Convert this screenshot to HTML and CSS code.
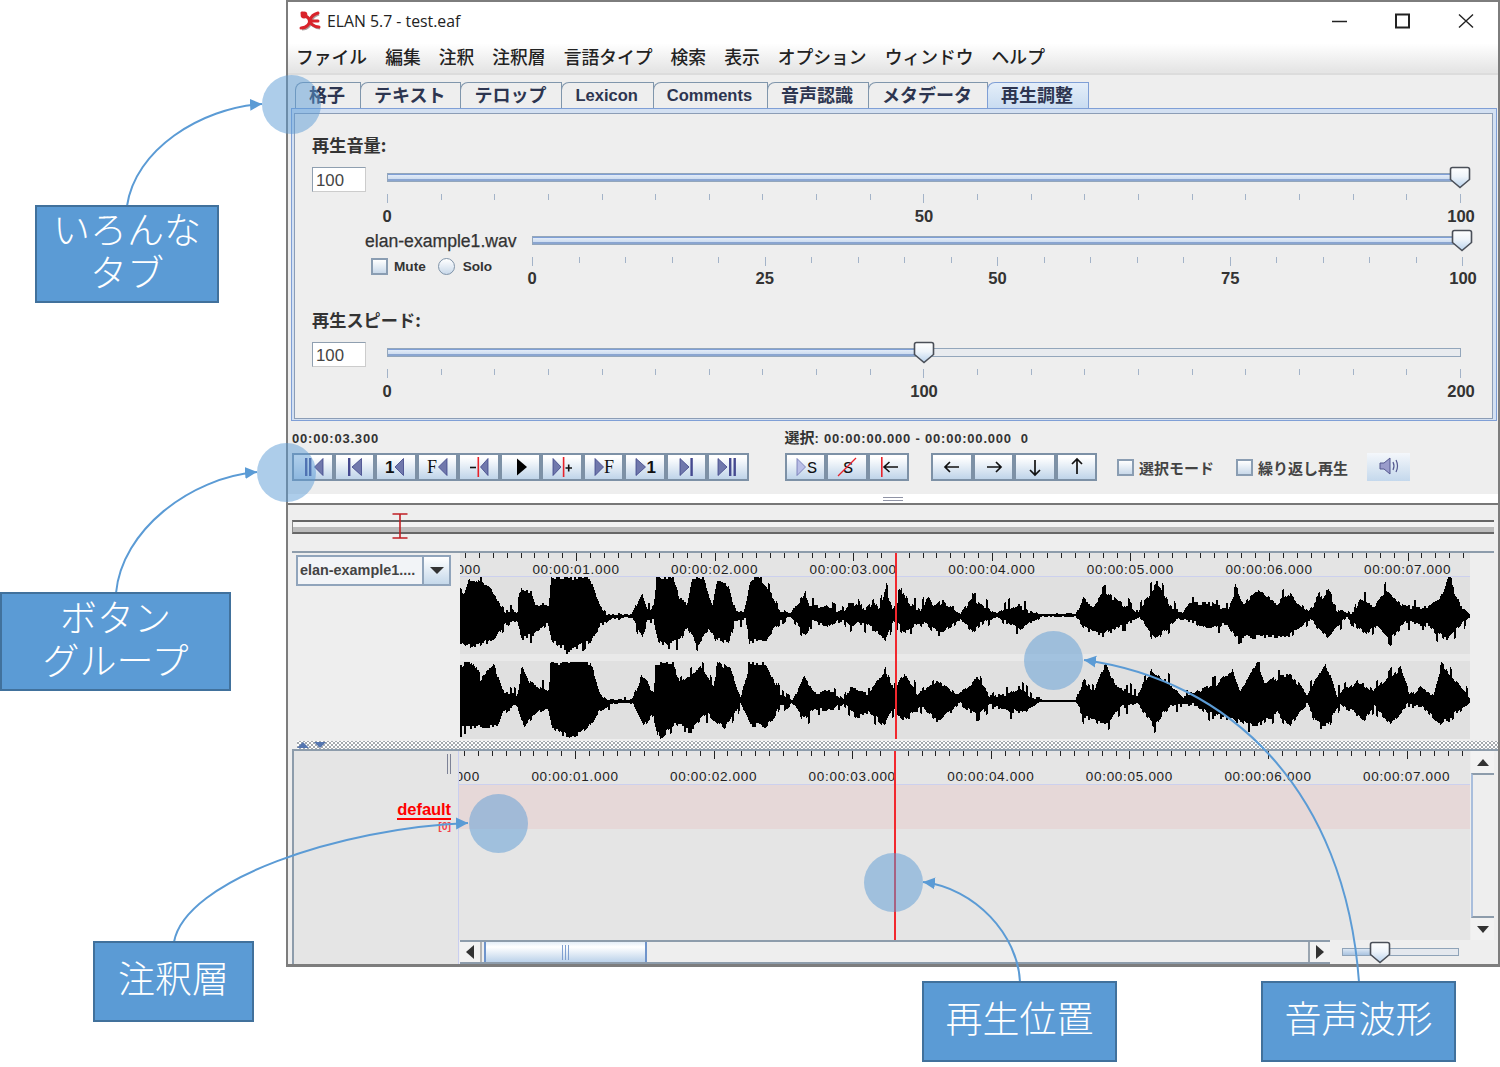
FILE: index.html

```html
<!DOCTYPE html>
<html lang="ja">
<head>
  <meta charset="UTF-8">
  <title>ELAN 5.7 - test.eaf</title>
  <link rel="stylesheet" href="styles.css">
</head>
<body>
<div class="page">

  <svg class="defs" width="0" height="0">
    <defs>
      <linearGradient id="thumbFill" x1="0" y1="0" x2="0" y2="1">
        <stop offset="0" stop-color="#ffffff"/>
        <stop offset="0.45" stop-color="#eef4fa"/>
        <stop offset="1" stop-color="#b9d2ec"/>
      </linearGradient>
      <symbol id="thumb" viewBox="0 0 22 23">
        <path d="M1.5 3.5Q1.5 1.5 3.5 1.5H18.5Q20.5 1.5 20.5 3.5V13.5L11 21.5L1.5 13.5Z" fill="url(#thumbFill)" stroke="#4a4f58" stroke-width="1.6"/>
      </symbol>
    </defs>
  </svg>

  <div class="window">
    <div class="chrome">
      <div class="titlebar">
        <svg class="logo" viewBox="0 0 22 20">
          <g fill="none" stroke="#a9a0a0" stroke-width="3" transform="translate(1 1)">
            <path d="M2 17C8 17 12 12 10 8S4 5 3 2"/><path d="M19 2C15 3 12 6 11 9S15 16 20 16"/>
          </g>
          <g fill="none" stroke="#d9232b" stroke-width="3" stroke-linecap="round">
            <path d="M2 17C8 17 12 12 10 8S4 5 3 2"/><path d="M19 2C15 3 12 6 11 9S15 16 20 16"/><path d="M12 10H19"/>
          </g>
          <circle cx="5" cy="4" r="3.4" fill="#d9232b"/>
        </svg>
        <span class="title">ELAN 5.7 - test.eaf</span>
        <div class="win-controls">
          <svg viewBox="0 0 16 16"><path d="M0 8.5H15" stroke="#222" stroke-width="1.5"/></svg>
          <svg viewBox="0 0 16 16"><rect x="1" y="1.5" width="13" height="13" fill="none" stroke="#222" stroke-width="2"/></svg>
          <svg viewBox="0 0 16 16"><path d="M1 1.5L15 14.5M15 1.5L1 14.5" stroke="#222" stroke-width="1.4"/></svg>
        </div>
      </div>
      <div class="menubar">
        <span>ファイル</span><span>編集</span><span>注釈</span><span>注釈層</span><span>言語タイプ</span><span>検索</span><span>表示</span><span>オプション</span><span>ウィンドウ</span><span>ヘルプ</span>
      </div>
    </div>

    <div class="tabs">
      <div class="tab">格子</div>
      <div class="tab">テキスト</div>
      <div class="tab">テロップ</div>
      <div class="tab latin">Lexicon</div>
      <div class="tab latin">Comments</div>
      <div class="tab">音声認識</div>
      <div class="tab">メタデータ</div>
      <div class="tab active">再生調整</div>
    </div>

    <div class="tab-panel">
      <div class="tab-inner">
        <div class="field-title first">再生音量:</div>
        <div class="field-row">
          <div class="num-input">100</div>
          <div class="slider">
            <div class="track"><div class="fill full"></div>
              <svg class="thumb end"><use href="#thumb"/></svg>
            </div>
            <div class="ticks" data-count="20" data-major="10"></div>
            <div class="scale"><span>0</span><span>50</span><span>100</span></div>
          </div>
        </div>
        <div class="field-row second">
          <div class="track-head">
            <div class="wav-name">elan-example1.wav</div>
            <div class="mute-row">
              <span class="check"></span><span class="small">Mute</span>
              <span class="radio"></span><span class="small">Solo</span>
            </div>
          </div>
          <div class="slider wide">
            <div class="track"><div class="fill full"></div>
              <svg class="thumb end"><use href="#thumb"/></svg>
            </div>
            <div class="ticks" data-count="20" data-major="5"></div>
            <div class="scale"><span>0</span><span>25</span><span>50</span><span>75</span><span>100</span></div>
          </div>
        </div>
        <div class="field-title">再生スピード:</div>
        <div class="field-row">
          <div class="num-input">100</div>
          <div class="slider">
            <div class="track"><div class="fill half"></div>
              <svg class="thumb mid"><use href="#thumb"/></svg>
            </div>
            <div class="ticks" data-count="20" data-major="10"></div>
            <div class="scale"><span>0</span><span>100</span><span>200</span></div>
          </div>
        </div>
      </div>
    </div>

    <div class="toolbar">
      <div class="tool-col">
        <div class="time-label">00:00:03.300</div>
        <div class="btn-group">
          <div class="btn"><svg viewBox="0 0 38 22"><rect class="bar" x="11" y="2" width="2.4" height="18"/><rect class="bar" x="15" y="2" width="2.4" height="18"/><polygon class="tri" points="20.5,11 29,2.5 29,19.5"/></svg></div>
          <div class="btn"><svg viewBox="0 0 38 22"><rect class="bar" x="12" y="2" width="2.4" height="18"/><polygon class="tri" points="16,11 25.5,2.5 25.5,19.5"/></svg></div>
          <div class="btn"><svg viewBox="0 0 38 22"><text class="t-bold" x="8" y="16.5">1</text><polygon class="tri" points="18,11 26.5,2.5 26.5,19.5"/></svg></div>
          <div class="btn"><svg viewBox="0 0 38 22"><text class="t-mono" x="8" y="17">F</text><polygon class="tri" points="19.5,11 28,2.5 28,19.5"/></svg></div>
          <div class="btn"><svg viewBox="0 0 38 22"><path d="M10 11.5H16" stroke="#111" stroke-width="1.6"/><rect class="red" x="17.5" y="1" width="1.6" height="20"/><polygon class="tri" points="20.5,11 28,2.5 28,19.5"/></svg></div>
          <div class="btn"><svg viewBox="0 0 38 22"><polygon points="15,2.5 25,11 15,19.5" fill="#000"/></svg></div>
          <div class="btn"><svg viewBox="0 0 38 22"><polygon class="tri" points="10,2.5 18,11 10,19.5"/><rect class="red" x="19.8" y="1" width="1.6" height="20"/><path d="M22.5 12H29M25.7 8.5V15.5" stroke="#111" stroke-width="1.6"/></svg></div>
          <div class="btn"><svg viewBox="0 0 38 22"><polygon class="tri" points="10,2.5 18.5,11 10,19.5"/><text class="t-mono" x="19" y="17">F</text></svg></div>
          <div class="btn"><svg viewBox="0 0 38 22"><polygon class="tri" points="10,2.5 19.5,11 10,19.5"/><text class="t-bold" x="20.5" y="16.5">1</text></svg></div>
          <div class="btn"><svg viewBox="0 0 38 22"><polygon class="tri" points="12,2.5 21,11 12,19.5"/><rect class="bar" x="22.4" y="2" width="2.4" height="18"/></svg></div>
          <div class="btn"><svg viewBox="0 0 38 22"><polygon class="tri" points="9,2.5 18,11 9,19.5"/><rect class="bar" x="20" y="2" width="2.4" height="18"/><rect class="bar" x="24.5" y="2" width="2.4" height="18"/></svg></div>
        </div>
      </div>
      <div class="tool-col right">
        <div class="time-label"><span class="jp">選択</span>: 00:00:00.000 - 00:00:00.000&nbsp; 0</div>
        <div class="tool-row">
          <div class="btn-group">
            <div class="btn"><svg viewBox="0 0 38 22"><polygon class="tri pale" points="10,2.5 18.5,11 10,19.5"/><text class="t-s" x="20" y="16.5">S</text></svg></div>
            <div class="btn"><svg viewBox="0 0 38 22"><text class="t-s" x="15" y="16.5">S</text><path d="M10 20L28 2" stroke="#e8222a" stroke-width="1.2"/></svg></div>
            <div class="btn"><svg viewBox="0 0 38 22"><rect class="red" x="11" y="1" width="1.6" height="20"/><path d="M14 11H28M19.5 6L14 11L19.5 16" fill="none" stroke="#111" stroke-width="1.6"/></svg></div>
          </div>
          <div class="btn-group arrows">
            <div class="btn"><svg viewBox="0 0 38 22"><path d="M12 11H26M17 6L12 11L17 16" fill="none" stroke="#111" stroke-width="1.7"/></svg></div>
            <div class="btn"><svg viewBox="0 0 38 22"><path d="M12 11H26M21 6L26 11L21 16" fill="none" stroke="#111" stroke-width="1.7"/></svg></div>
            <div class="btn"><svg viewBox="0 0 38 22"><path d="M19 4V19M14 14L19 19L24 14" fill="none" stroke="#111" stroke-width="1.7"/></svg></div>
            <div class="btn"><svg viewBox="0 0 38 22"><path d="M19 3V18M14 8L19 3L24 8" fill="none" stroke="#111" stroke-width="1.7"/></svg></div>
          </div>
          <span class="check first-check"></span><span class="check-label">選択モード</span>
          <span class="check second-check"></span><span class="check-label">繰り返し再生</span>
          <div class="speaker"><svg viewBox="0 0 26 22"><polygon points="4,8 8,8 14,3 14,19 8,14 4,14" fill="#9a9ccb" stroke="#55588f" stroke-width="1"/><path d="M17 7Q19 11 17 15M20 5Q23 11 20 17" fill="none" stroke="#55588f" stroke-width="1.2"/></svg></div>
        </div>
      </div>
    </div>

    <div class="split-grip"><span></span></div>

    <div class="selection-wrap">
      <div class="selection-bar"></div>
      <svg class="ibeam" viewBox="0 0 16 26"><path d="M0.5 1H15.5M0.5 25H15.5M8 1V25" fill="none" stroke="#c01f24" stroke-width="1.6"/></svg>
    </div>

    <div class="wave-panel">
      <div class="wave-side">
        <div class="combo"><span class="combo-text">elan-example1....</span><span class="combo-arrow"><i></i></span></div>
      </div>
      <div class="wave-main">
        <div class="ruler" data-h="23" data-y="21"></div>
        <div class="wave-view"><svg id="wave" viewBox="0 21 3030 486" preserveAspectRatio="none"></svg></div>
        <div class="cursor"></div>
      </div>
      <div class="wave-end"></div>
    </div>

    <div class="splitter"><i class="up"></i><i class="down"></i></div>

    <div class="tier-panel">
      <div class="tier-names">
        <span class="grip"></span>
        <div class="tier-name">default</div>
        <div class="tier-count">[0]</div>
      </div>
      <div class="tier-right">
        <div class="tier-top">
          <div class="tier-view">
            <div class="ruler" data-h="33" data-y="30"></div>
            <div class="tier-row"></div>
            <div class="cursor"></div>
          </div>
          <div class="vscroll">
            <div class="v-btn"><i class="arrow-up"></i></div>
            <div class="v-track"></div>
            <div class="v-btn"><i class="arrow-down"></i></div>
          </div>
        </div>
        <div class="tier-bottom">
          <div class="hscroll">
            <div class="h-btn"><i class="arrow-left"></i></div>
            <div class="h-thumb"><span></span></div>
            <div class="h-track"></div>
            <div class="h-btn"><i class="arrow-right"></i></div>
          </div>
          <div class="zoom-slider">
            <div class="zoom-fill"></div>
            <svg class="zoom-thumb"><use href="#thumb"/></svg>
          </div>
        </div>
      </div>
    </div>
  </div>

  <!-- annotations drawn on top of the screenshot -->
  <div class="spot s-tabs"></div>
  <div class="spot s-buttons"></div>
  <div class="spot s-wave"></div>
  <div class="spot s-tier"></div>
  <div class="spot s-pos"></div>

  <svg class="callouts" viewBox="0 0 1500 1067">
    <defs>
      <marker id="head" markerUnits="userSpaceOnUse" markerWidth="13" markerHeight="14" refX="12" refY="7" orient="auto">
        <path d="M0 1L12 7L0 13Z" fill="#5b9bd5"/>
      </marker>
    </defs>
    <g fill="none" stroke="#5b9bd5" stroke-width="2" marker-end="url(#head)">
      <path d="M127 206C135 150 200 108 262 104"/>
      <path d="M116 593C122 530 190 478 257 472"/>
      <path d="M174 942C185 880 340 828 468 823"/>
      <path d="M1020 982C1018 935 975 888 923 882"/>
      <path d="M1359 982C1345 790 1230 680 1084 660"/>
    </g>
  </svg>

  <div class="note n-tabs">いろんな<br>タブ</div>
  <div class="note n-buttons">ボタン<br>グループ</div>
  <div class="note n-tier">注釈層</div>
  <div class="note n-pos">再生位置</div>
  <div class="note n-wave">音声波形</div>
</div>
<script src="wave.js"></script>
</body>
</html>
```

FILE: styles.css

```css
* {
  box-sizing: border-box;
}
body {
  margin: 0;
  background: #fff;
  font-family: "Liberation Sans", "Noto Sans CJK JP", sans-serif;
  color: #333;
}
.page {
  position: relative;
  width: 1500px;
  height: 1067px;
  overflow: hidden;
}
.defs {
  display: block;
}

/* window */
.window {
  width: 1214px;
  height: 967px;
  margin-left: 286px;
  border: 2px solid #7d7d7d;
  border-bottom-width: 3px;
  background: #eee;
}
.chrome {
  height: 73px;
  background: linear-gradient(#fff 58%, #e5e5e5 97%);
  border-bottom: 2px solid #dcdcdc;
}
.titlebar {
  display: flex;
  align-items: center;
  height: 38px;
  padding-left: 11px;
}
.logo {
  width: 22px;
  height: 20px;
}
.title {
  margin-left: 6px;
  font-family: "Open Sans", sans-serif;
  font-size: 15.8px;
  color: #222;
}
.win-controls {
  display: flex;
  margin-left: auto;
  margin-right: 24px;
  gap: 47px;
}
.win-controls svg {
  width: 16px;
  height: 16px;
}
.menubar {
  display: flex;
  gap: 18px;
  padding-left: 8px;
  font-family: "Noto Sans CJK JP", sans-serif;
  font-size: 17.8px;
  font-weight: 500;
  line-height: 33px;
  color: #222;
}

/* tabs */
.tabs {
  display: flex;
  height: 33px;
  padding: 7px 0 0 7px;
}
.tab {
  padding: 0 15px 0 13px;
  border: 1px solid #8096ac;
  border-bottom: 0;
  border-top-left-radius: 8px;
  font-family: "Noto Sans CJK JP", sans-serif;
  font-size: 18px;
  font-weight: 700;
  line-height: 22px;
  color: #2d3550;
  margin-right: -1px;
}
.tab.latin {
  font-family: "Liberation Sans", sans-serif;
  font-size: 16.5px;
  line-height: 24px;
}
.tab.active {
  background: linear-gradient(#e4eef9, #c9dcf1);
  border-color: #7f9fd6;
}
.tab-panel {
  width: 1206px;
  height: 313px;
  margin-left: 3px;
  padding: 4px 3px 1px 2px;
  border: 1px solid #7f9fd6;
  background: #d3e0f2;
}
.tab-inner {
  height: 100%;
  padding-left: 17px;
  border: 1px solid #8c9db6;
  background: #eee;
}
.field-title {
  height: 22px;
  margin-top: 20px;
  font-family: "Noto Sans CJK JP", sans-serif;
  font-size: 17.2px;
  font-weight: 700;
  line-height: 22px;
  color: #333;
}
.field-row {
  display: flex;
  margin-top: 11px;
}
.field-row.second {
  margin-top: 3px;
  padding-left: 53px;
}
.num-input {
  width: 54px;
  height: 25px;
  padding-left: 3px;
  border: 1px solid #8f9fb0;
  border-bottom-color: #ccc;
  border-right-color: #ccc;
  background: #fff;
  font-size: 16.8px;
  line-height: 25px;
  color: #444;
}
.slider {
  position: relative;
  width: 1074px;
  margin-left: 21px;
  padding-top: 6px;
}
.slider.wide {
  width: 931px;
  margin-left: 0;
}
.track {
  position: relative;
  height: 9px;
  border: 1px solid #93a6bb;
  background: #e8ebef;
}
.fill {
  height: 100%;
  background: linear-gradient(#7f9fd6 0, #7f9fd6 1px, #e2ebf7 1px, #cddcf0 5px, #8aa5d0 5px);
}
.fill.full {
  width: 100%;
}
.fill.half {
  width: 50%;
}
.thumb {
  position: absolute;
  top: -8px;
  width: 22px;
  height: 23px;
  margin-left: -11px;
}
.thumb.end {
  left: 100%;
}
.thumb.mid {
  left: 50%;
}
.ticks {
  display: flex;
  justify-content: space-between;
  margin-top: 12px;
  height: 8px;
}
.ticks i {
  width: 1px;
  height: 6px;
  background: #a3b3c8;
}
.ticks i.major {
  height: 9px;
}
.scale {
  display: flex;
  justify-content: space-between;
  margin-top: 5px;
  font-size: 16.6px;
  font-weight: 700;
  line-height: 20px;
  color: #333;
}
.wide .scale {
  margin-top: 4px;
}
.scale span {
  display: flex;
  justify-content: center;
  width: 0;
}
.track-head {
  width: 167px;
}
.wav-name {
  height: 22px;
  font-size: 17.6px;
  line-height: 22px;
  color: #333;
  -webkit-text-stroke: 0.25px #333;
  white-space: nowrap;
}
.mute-row {
  display: flex;
  align-items: center;
  margin-top: 6px;
  padding-left: 6px;
}
.check {
  display: block;
  width: 17px;
  height: 17px;
  border: 2px solid #8a9db2;
  background: linear-gradient(#fff, #c9d9ea);
}
.radio {
  display: block;
  width: 17px;
  height: 17px;
  margin-left: 12px;
  border: 1.5px solid #7f93a8;
  border-radius: 50%;
  background: linear-gradient(#fff, #c9d9ea);
}
.small {
  margin-left: 6px;
  font-size: 13.6px;
  font-weight: 700;
  color: #333;
}
.small:last-child {
  margin-left: 8px;
}

/* toolbar */
.toolbar {
  display: flex;
  height: 73px;
  padding: 9px 0 0 4px;
}
.tool-col.right {
  margin-left: 36px;
}
.time-label {
  height: 17px;
  font-size: 13px;
  font-weight: 700;
  letter-spacing: 0.8px;
  line-height: 17px;
  white-space: nowrap;
}
.time-label .jp {
  font-family: "Noto Sans CJK JP", sans-serif;
  font-size: 15px;
  line-height: 0;
  letter-spacing: 0;
}
.btn-group {
  display: flex;
  margin-top: 6px;
}
.tool-row {
  display: flex;
  align-items: flex-start;
}
.btn-group.arrows {
  margin-left: 22px;
}
.btn {
  width: 41.5px;
  height: 28px;
  border: 2px solid #7d91a6;
  background: linear-gradient(#fff, #fff 10%, #bfd4e9);
}
.btn svg {
  display: block;
  width: 38px;
  height: 22px;
  margin: 1px auto 0;
}
.tri {
  fill: #7078ac;
  stroke: #3e4488;
  stroke-width: 0.8;
}
.tri.pale {
  fill: #b9bee6;
  stroke: #6c72b0;
}
.bar {
  fill: #454a90;
}
.red {
  fill: #e8222a;
}
.t-bold {
  font-family: "Liberation Sans", sans-serif;
  font-size: 17px;
  font-weight: 700;
  fill: #111;
}
.t-mono {
  font-family: "Liberation Serif", serif;
  font-size: 18px;
  fill: #111;
}
.t-s {
  font-family: "Liberation Mono", monospace;
  font-size: 17px;
  fill: #111;
}
.check.first-check {
  margin: 12px 0 0 20px;
}
.check.second-check {
  margin: 12px 0 0 22px;
}
.check-label {
  margin: 10px 0 0 5px;
  font-family: "Noto Sans CJK JP", sans-serif;
  font-size: 15px;
  font-weight: 700;
  line-height: 21px;
  white-space: nowrap;
  color: #444;
}
.speaker {
  width: 43px;
  height: 28px;
  margin: 6px 0 0 19px;
  background: linear-gradient(#f4f7fb, #c4d8ec);
}
.speaker svg {
  display: block;
  width: 26px;
  height: 22px;
  margin: 2px auto 0;
}
.split-grip {
  display: flex;
  align-items: center;
  justify-content: center;
  height: 11px;
  background: #fff;
  border-bottom: 2px solid #777;
}
.split-grip span {
  width: 20px;
  height: 4px;
  border-top: 1px solid #8f93a5;
  border-bottom: 1px solid #8f93a5;
}

/* selection strip */
.selection-wrap {
  position: relative;
  height: 46px;
  padding: 15px 4px 0;
}
.selection-bar {
  height: 14px;
  border-top: 2px solid #666;
  border-bottom: 2px solid #666;
  border-left: 1px solid #888;
  background: linear-gradient(#f3f3f3 50%, #bbb 50%);
}
.ibeam {
  position: absolute;
  left: 104px;
  top: 8px;
  width: 16px;
  height: 26px;
}

/* waveform */
.wave-panel {
  display: grid;
  grid-template-columns: 168px 1010px 24px;
  width: 1202px;
  height: 188px;
  margin-left: 4px;
  border-top: 2px solid #8d9cab;
}
.combo {
  display: flex;
  width: 155px;
  height: 31px;
  margin: 2px 0 0 4px;
  border: 2px solid #90a4bb;
}
.combo-text {
  width: 126px;
  padding-left: 2px;
  background: #f2f4f7;
  border-right: 2px solid #90a4bb;
  font-size: 14.4px;
  font-weight: 700;
  line-height: 27px;
  color: #444;
  white-space: nowrap;
  overflow: hidden;
}
.combo-arrow {
  display: flex;
  flex: 1;
  align-items: center;
  justify-content: center;
  background: linear-gradient(#fff, #c5d8ea);
}
.combo-arrow i {
  border-top: 7px solid #333;
  border-left: 7.5px solid transparent;
  border-right: 7.5px solid transparent;
}
.wave-main {
  position: relative;
  background: #e4e4e4;
}
.ruler {
  border-bottom: 1px solid #ccd0ee;
}
.wave-main .ruler {
  height: 24px;
}
.tier-view .ruler {
  height: 34px;
}
.ruler svg {
  display: block;
  width: 1010px;
}
.ruler text {
  font-family: "Liberation Sans", sans-serif;
  font-size: 13.5px;
  letter-spacing: 0.7px;
  fill: #222;
  text-anchor: middle;
}
.wave-view {
  height: 162px;
  background: linear-gradient(#e0e0e0 77px, #e9e9e9 77px, #e9e9e9 84px, #e0e0e0 84px);
}
#wave {
  display: block;
  width: 1010px;
  height: 162px;
}
.cursor {
  position: absolute;
  left: 435px;
  top: 0;
  bottom: 0;
  width: 2px;
  background: #f2282e;
}
.splitter {
  display: flex;
  gap: 5px;
  height: 12px;
  margin-left: 4px;
  padding: 2px 0 0 5px;
  border-bottom: 2px solid #8d9cab;
  background-color: #fff;
  background-image: radial-gradient(circle, #a4a9ae 0.9px, transparent 1.1px), radial-gradient(circle, #a4a9ae 0.9px, transparent 1.1px);
  background-size: 4px 4px;
  background-position: 0 2px, 2px 4px;
  background-clip: content-box;
}
.splitter i {
  width: 0;
  height: 0;
  margin-top: 1px;
  border-left: 6px solid transparent;
  border-right: 6px solid transparent;
}
.splitter .up {
  border-bottom: 6px solid #5576b0;
}
.splitter .down {
  border-top: 6px solid #5576b0;
}

/* tiers */
.tier-panel {
  display: flex;
  height: 213px;
  margin-left: 4px;
  border-left: 2px solid #8d9cab;
}
.tier-names {
  display: flex;
  flex-direction: column;
  align-items: flex-end;
  width: 165px;
  padding-right: 7px;
  border-right: 1px solid #c9cef0;
  background: #e5e5e5;
}
.grip {
  width: 4px;
  height: 20px;
  margin: 3px 0 0 0;
  border-left: 1px solid #7d8296;
  border-right: 1px solid #7d8296;
}
.tier-name {
  height: 20px;
  margin-top: 26px;
  font-size: 16.6px;
  font-weight: 700;
  line-height: 19px;
  letter-spacing: -0.1px;
  color: #f00;
  border-bottom: 2px solid #f00;
}
.tier-count {
  font-size: 10.5px;
  font-weight: 700;
  line-height: 12px;
  color: #f2414a;
}
.tier-right {
  flex: 1;
}
.tier-top {
  display: flex;
  height: 189px;
}
.tier-view {
  position: relative;
  width: 1011px;
  background: #e5e5e5;
}
.tier-row {
  height: 44px;
  background: #e6d8d8;
}
.vscroll {
  display: flex;
  flex-direction: column;
  width: 23px;
  margin-left: 1px;
}
.v-btn {
  display: flex;
  align-items: center;
  justify-content: center;
  height: 22px;
  background: #f2f2f2;
}
.v-track {
  flex: 1;
  border-left: 2px solid #a9bedc;
  border-top: 2px solid #8d9cab;
  border-bottom: 2px solid #8d9cab;
}
.arrow-up {
  border-bottom: 7px solid #333;
  border-left: 6px solid transparent;
  border-right: 6px solid transparent;
}
.arrow-down {
  border-top: 7px solid #333;
  border-left: 6px solid transparent;
  border-right: 6px solid transparent;
}
.tier-bottom {
  display: flex;
  height: 24px;
}
.hscroll {
  display: flex;
  width: 870px;
  height: 24px;
  margin-left: 1px;
  border-top: 2px solid #8d9cab;
  border-bottom: 2px solid #8d9cab;
}
.h-btn {
  display: flex;
  align-items: center;
  justify-content: center;
  width: 22px;
  background: #f2f2f2;
  border-right: 2px solid #b5b5b5;
}
.h-btn:last-child {
  border-right: 0;
  border-left: 2px solid #9aa5b0;
}
.arrow-left {
  border-right: 8px solid #333;
  border-top: 7px solid transparent;
  border-bottom: 7px solid transparent;
}
.arrow-right {
  border-left: 8px solid #333;
  border-top: 7px solid transparent;
  border-bottom: 7px solid transparent;
}
.h-thumb {
  display: flex;
  align-items: center;
  justify-content: center;
  width: 163px;
  margin-left: 2px;
  border: 1px solid #6f94cb;
  border-width: 0 2px;
  background: linear-gradient(#e4eef8, #fff 25%, #bcd2ea);
}
.h-thumb span {
  width: 7px;
  height: 15px;
  background: repeating-linear-gradient(90deg, #7f9fd0 0 1px, transparent 1px 3px);
}
.h-track {
  flex: 1;
}
.zoom-slider {
  position: relative;
  width: 117px;
  height: 8px;
  margin: 8px 0 0 12px;
  border: 1px solid #8fa3b8;
  background: #e4e8ee;
}
.zoom-fill {
  width: 33%;
  height: 100%;
  background: linear-gradient(#dbe7f4, #a9c3e0);
}
.zoom-thumb {
  position: absolute;
  top: -8px;
  left: 26px;
  width: 22px;
  height: 23px;
}

/* annotations */
.spot {
  position: absolute;
  width: 59px;
  height: 59px;
  border-radius: 50%;
  background: rgba(91, 155, 213, 0.5);
}
.s-tabs {
  left: 262px;
  top: 75px;
}
.s-buttons {
  left: 257px;
  top: 443px;
}
.s-wave {
  left: 1024px;
  top: 631px;
}
.s-tier {
  left: 469px;
  top: 794px;
}
.s-pos {
  left: 864px;
  top: 853px;
}
.callouts {
  position: absolute;
  left: 0;
  top: 0;
  width: 1500px;
  height: 1067px;
}
.note {
  position: absolute;
  display: flex;
  align-items: center;
  justify-content: center;
  padding-bottom: 8px;
  text-align: center;
  border: 2px solid #41719c;
  background: #5b9bd5;
  font-family: "Noto Sans CJK JP", sans-serif;
  font-size: 37px;
  font-weight: 300;
  line-height: 43px;
  color: #fff;
}
.n-tabs {
  left: 35px;
  top: 205px;
  width: 184px;
  height: 98px;
}
.n-buttons {
  left: 0;
  top: 592px;
  width: 231px;
  height: 99px;
}
.n-tier {
  left: 93px;
  top: 941px;
  width: 161px;
  height: 81px;
}
.n-pos {
  left: 922px;
  top: 981px;
  width: 195px;
  height: 81px;
}
.n-wave {
  left: 1261px;
  top: 981px;
  width: 195px;
  height: 81px;
}
```

FILE: wave.js

```js
// tick marks for the sliders
document.querySelectorAll('.ticks').forEach(function (el) {
  var count = +el.dataset.count;
  var major = +el.dataset.major;
  var html = '';
  for (var i = 0; i <= count; i++) {
    html += i % major === 0 ? '<i class="major"></i>' : '<i></i>';
  }
  el.innerHTML = html;
});

// time rulers
function pad(n) {
  return n < 10 ? '0' + n : '' + n;
}
document.querySelectorAll('.ruler').forEach(function (el) {
  var perSec = 138.6;
  var first = 116 - perSec;
  var h = +el.dataset.h;
  var ticks = '';
  var labels = '';
  for (var i = 0; i < 84; i++) {
    var x = Math.round(first + i * perSec / 10) + 0.5;
    ticks += 'M' + x + ' 0V' + (i % 10 === 0 ? 8 : 5);
  }
  for (var s = 0; s < 8; s++) {
    labels += '<text x="' + (first + s * perSec) + '" y="' + el.dataset.y + '">00:00:' + pad(s) + '.000</text>';
  }
  el.innerHTML = '<svg height="' + h + '" viewBox="0 0 1010 ' + h + '"><path d="' + ticks + '" stroke="#222" fill="none"/>' + labels + '</svg>';
});

// waveform envelopes, traced in 3x coordinates
var t1 = [0,60,10,70,25,25,50,30,75,40,95,60,130,120,170,125,185,65,215,70,225,100,265,105,272,22,388,22,420,110,440,132,515,132,545,65,560,115,580,110,590,22,640,25,660,90,680,100,695,22,730,22,755,110,770,35,805,50,825,120,850,125,870,30,890,22,920,55,960,120,990,130,1035,70,1050,110,1100,110,1150,128,1165,105,1190,100,1200,125,1225,110,1240,90,1255,115,1275,58,1295,115,1330,65,1345,100,1380,125,1400,80,1420,105,1450,95,1500,130,1535,90,1570,110,1610,130,1670,102,1705,125,1740,132,1845,132,1870,85,1900,110,1930,65,1980,100,2030,125,2050,100,2090,35,2130,110,2165,130,2190,100,2250,100,2300,120,2325,60,2350,105,2390,60,2450,100,2485,70,2540,125,2600,65,2630,120,2680,130,2700,88,2740,110,2775,60,2830,110,2900,115,2940,80,2965,22,3000,110,3030,132];
var b1 = [0,215,20,230,50,225,100,210,130,165,170,155,185,205,215,195,265,160,272,215,325,240,390,215,420,165,460,145,515,142,545,205,560,155,580,155,590,210,620,225,660,210,680,170,710,228,745,175,765,210,805,215,820,155,855,150,870,212,915,212,960,150,990,140,1040,200,1050,155,1110,165,1150,150,1170,170,1190,160,1225,170,1240,178,1275,208,1300,150,1335,185,1380,155,1420,180,1450,185,1500,150,1535,185,1570,155,1610,140,1640,160,1680,178,1740,140,1845,140,1880,180,1930,195,1980,165,2040,145,2090,208,2150,145,2200,155,2240,180,2300,160,2325,200,2390,200,2490,195,2550,150,2600,200,2660,140,2715,195,2740,165,2790,205,2840,155,2900,165,2960,212,3020,145];
var t2 = [0,285,40,278,60,330,100,280,125,360,170,378,185,290,210,340,265,360,272,278,390,278,420,370,440,388,515,388,545,315,580,370,585,278,640,285,660,340,720,290,760,350,775,280,810,300,840,380,870,278,915,280,960,370,995,390,1030,320,1060,370,1100,360,1150,385,1170,355,1225,375,1275,298,1300,360,1330,312,1370,370,1430,330,1490,375,1550,325,1590,380,1630,375,1680,352,1715,385,1755,390,1845,390,1870,330,1900,360,1935,285,1970,350,2030,375,2075,300,2125,340,2170,380,2270,340,2315,300,2340,360,2390,280,2410,335,2490,315,2540,375,2595,280,2630,375,2690,335,2740,360,2820,295,2850,375,2880,350,2920,375,2945,285,2990,340,3030,385];
var b2 = [0,475,60,470,110,470,130,425,170,405,190,470,235,425,265,420,272,470,330,505,385,470,420,420,460,400,515,398,550,465,580,430,600,505,640,465,700,470,740,430,790,475,840,400,870,465,920,470,960,410,995,400,1030,450,1060,420,1100,420,1150,405,1190,440,1225,425,1270,465,1300,420,1335,450,1380,410,1435,455,1500,400,1550,440,1590,405,1680,430,1740,395,1845,395,1870,440,1940,465,1980,410,2030,400,2080,465,2130,405,2200,405,2250,430,2310,450,2390,465,2450,430,2490,465,2540,400,2575,460,2600,465,2640,400,2710,450,2740,410,2790,465,2840,405,2885,410,2940,460,3000,420,3030,395];

var seed = 7;
function rnd() {
  seed = (seed * 16807) % 2147483647;
  return seed / 2147483647;
}
function at(env, x) {
  for (var i = 2; i < env.length; i += 2) {
    if (x <= env[i]) {
      var f = (x - env[i - 2]) / (env[i] - env[i - 2]);
      return env[i - 1] + (env[i + 1] - env[i - 1]) * f;
    }
  }
  return env[env.length - 1];
}
function channel(top, bottom, minY, maxY) {
  var up = [];
  var down = [];
  var ja = 0;
  var jb = 0;
  for (var x = 0; x <= 3030; x += 3) {
    var a = at(top, x);
    var b = at(bottom, x);
    var open = Math.min(1, (b - a) / 40);
    // hold the jitter for a couple of pixels so the edge looks blocky
    if (x % 6 === 0) {
      ja = (rnd() - 0.5) * 14;
      jb = (rnd() - 0.5) * 14;
      if (rnd() < 0.1) ja -= 22;
      if (rnd() < 0.1) jb += 20;
    }
    var mid = (a + b) / 2;
    a = Math.max(minY, Math.min(a + ja * open, mid - 3));
    b = Math.min(maxY, Math.max(b + jb * open, mid + 3));
    a = Math.round(a / 3) * 3;
    b = Math.round(b / 3) * 3;
    up.push(x + ' ' + a, (x + 3) + ' ' + a);
    down.unshift((x + 3) + ' ' + b, x + ' ' + b);
  }
  return 'M' + up.concat(down).join('L') + 'Z';
}
document.getElementById('wave').innerHTML =
  '<path fill="#000" d="' + channel(t1, b1, 22, 252) + channel(t2, b2, 276, 506) + '"/>';
```
